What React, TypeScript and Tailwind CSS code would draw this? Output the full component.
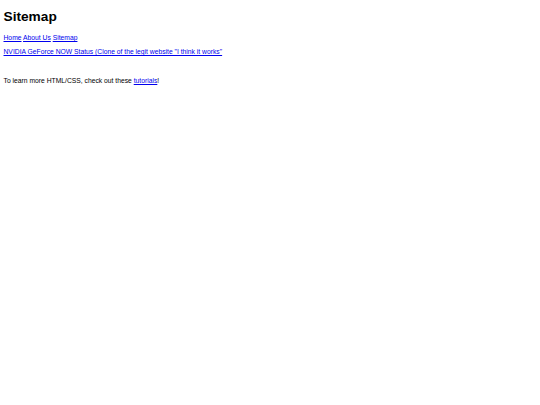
export default function App() {
  return (
    <div className="min-h-[405px] bg-white px-[3.5px] pt-[9px] font-['Liberation_Sans',Arial,sans-serif] text-black">
      <h1 className="text-[13.7px] font-bold leading-[15.6px]">Sitemap</h1>
      <p className="mt-[9.8px] text-[6.75px] leading-[7.8px]">
        <a href="#" className="text-[#0000ee] underline">Home</a>{" "}
        <a href="#" className="text-[#0000ee] underline">About Us</a>{" "}
        <a href="#" className="text-[#0000ee] underline">Sitemap</a>
      </p>
      <p className="mt-[5.8px] text-[6.75px] leading-[7.8px]">
        <a href="#" className="text-[#0000ee] underline">
          NVIDIA GeForce NOW Status (Clone of the legit website "I think it works"
        </a>
      </p>
      <p className="mt-[20.9px] text-[6.75px] leading-[7.8px]">
        To learn more HTML/CSS, check out these{" "}
        <a href="#" className="text-[#0000ee] underline">tutorials</a>!
      </p>
    </div>
  );
}
